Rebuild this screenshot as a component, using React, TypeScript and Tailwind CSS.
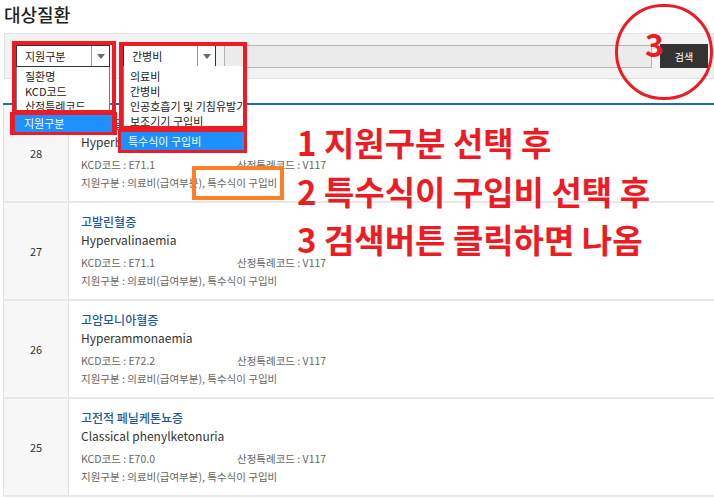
import React from "react";

const FONT = { fontFamily: '"Noto Sans CJK KR", "Noto Sans", sans-serif' };

type Row = { no: number; ko: string; en: string; kcd: string; v: string };
const rows: Row[] = [
  { no: 28, ko: "고베타알라닌혈증", en: "Hyperbetaalaninaemia", kcd: "E71.1", v: "V117" },
  { no: 27, ko: "고발린혈증", en: "Hypervalinaemia", kcd: "E71.1", v: "V117" },
  { no: 26, ko: "고암모니아혈증", en: "Hyperammonaemia", kcd: "E72.2", v: "V117" },
  { no: 25, ko: "고전적 페닐케톤뇨증", en: "Classical phenylketonuria", kcd: "E70.0", v: "V117" },
];

function Arrow() {
  return (
    <div className="w-[18px] h-full border-l border-[#9a9a9a] flex items-center justify-center">
      <svg width="8" height="5" viewBox="0 0 8 5">
        <path d="M0 0 L8 0 L4 5 Z" fill="#6b6b6b" />
      </svg>
    </div>
  );
}

function Select({ label, w }: { label: string; w: string }) {
  return (
    <div className={`${w} h-[22px] bg-white border border-[#333] flex items-center`}>
      <div className="flex-1 pl-[8px] text-[11px] leading-none text-[#222]">{label}</div>
      <Arrow />
    </div>
  );
}

export default function App() {
  return (
    <div className="relative w-[714px] h-[498px] overflow-hidden bg-white" style={FONT}>
      <div className="h-[28px] pl-[4px] text-[18px] leading-[28px] font-medium text-[#222]">대상질환</div>

      <div className="mt-[5px] ml-[4px] h-[46px] border border-[#e2e2e2] bg-[#f3f3f3] flex items-center pl-[11px]">
        <Select label="지원구분" w="w-[94px]" />
        <div className="ml-[13px]">
          <Select label="간병비" w="w-[93px]" />
        </div>
        <div className="ml-[8px] w-[428px] h-[23px] bg-[#ebebeb] border border-[#b5b5b5]" />
        <div className="ml-[8px] w-[48px] h-[24px] bg-[#333] text-white text-[10px] flex items-center justify-center">
          검색
        </div>
      </div>

      <div className="mt-[24px] ml-[3px] h-[2px] bg-[#1f6db3]" />

      <div className="ml-[3px]">
        {rows.map((r) => (
          <div key={r.no} className="flex h-[98px] border-b-2 border-[#e8e8e8]">
            <div className="w-[66px] bg-[#f7f7f7] border-l border-r border-[#e0e0e0] flex items-center justify-center text-[11px] text-[#333]">
              {r.no}
            </div>
            <div className="flex-1 pl-[12px] pt-[10px]">
              <div className="text-[12px] leading-[18px] font-medium text-[#1f5a98]">{r.ko}</div>
              <div className="text-[12px] leading-[18px] text-[#333]">{r.en}</div>
              <div className="mt-[5px] flex text-[10.5px] leading-[18px] text-[#666]">
                <span className="w-[156px]">KCD코드 : {r.kcd}</span>
                <span>산정특례코드 : {r.v}</span>
              </div>
              <div className="text-[10.5px] leading-[18px] text-[#666]">지원구분 : 의료비(급여부분), 특수식이 구입비</div>
            </div>
          </div>
        ))}
      </div>

      {/* dropdown 1 list */}
      <div className="absolute left-[16px] top-[67px] w-[94px] h-[47px] bg-white border-x border-b border-[#7a7a7a] pl-[8px] text-[11px] text-[#222]">
        <div className="h-[15px] leading-[15px] mt-[2px]">질환명</div>
        <div className="h-[15px] leading-[15px]">KCD코드</div>
        <div className="h-[15px] leading-[15px]">산정특례코드</div>
      </div>
      {/* dropdown 2 list */}
      <div className="absolute left-[123px] top-[66px] w-[121px] h-[64px] bg-white border-x border-b border-[#7a7a7a] pl-[6px] text-[11px] text-[#222] overflow-hidden whitespace-nowrap">
        <div className="h-[15px] leading-[15px] mt-[3px]">의료비</div>
        <div className="h-[15px] leading-[15px]">간병비</div>
        <div className="h-[15px] leading-[15px]">인공호흡기 및 기침유발기</div>
        <div className="h-[15px] leading-[15px]">보조기기 구입비</div>
      </div>

      {/* red annotation boxes */}
      <div className="absolute left-[12px] top-[41px] w-[104px] h-[73px] border-[4px] border-[#ed1c24]" />
      <div className="absolute left-[10px] top-[112px] w-[107px] h-[23px] border-y-[3px] border-x-[5px] border-[#ed1c24] bg-[#1e8fff] flex items-center pl-[9px] text-[11px] text-white">
        지원구분
      </div>
      <div className="absolute left-[119px] top-[42px] w-[128px] h-[88px] border-[4px] border-[#ed1c24]" />
      <div className="absolute left-[118px] top-[129px] w-[129px] h-[24px] border-[3px] border-[#ed1c24] bg-[#1e8fff] flex items-center pl-[7px] text-[11px] text-white">
        특수식이 구입비
      </div>

      {/* orange box */}
      <div className="absolute left-[192px] top-[166px] w-[92px] h-[34px] border-[4px] border-[#ff7f27]" />

      {/* circle 3 */}
      <div className="absolute left-[615px] top-[4px] w-[98px] h-[96px] rounded-full border-[3px] border-[#ed1c24]" />
      <div className="absolute left-[645px] top-[25px] text-[32px] leading-[36px] font-bold text-[#ed1c24]">3</div>

      {/* red text */}
      <div className="absolute left-[297px] top-[118px] text-[33px] leading-[48.5px] font-bold text-[#ed1c24] whitespace-nowrap">
        <div>1 지원구분 선택 후</div>
        <div>2 특수식이 구입비 선택 후</div>
        <div>3 검색버튼 클릭하면 나옴</div>
      </div>
    </div>
  );
}
